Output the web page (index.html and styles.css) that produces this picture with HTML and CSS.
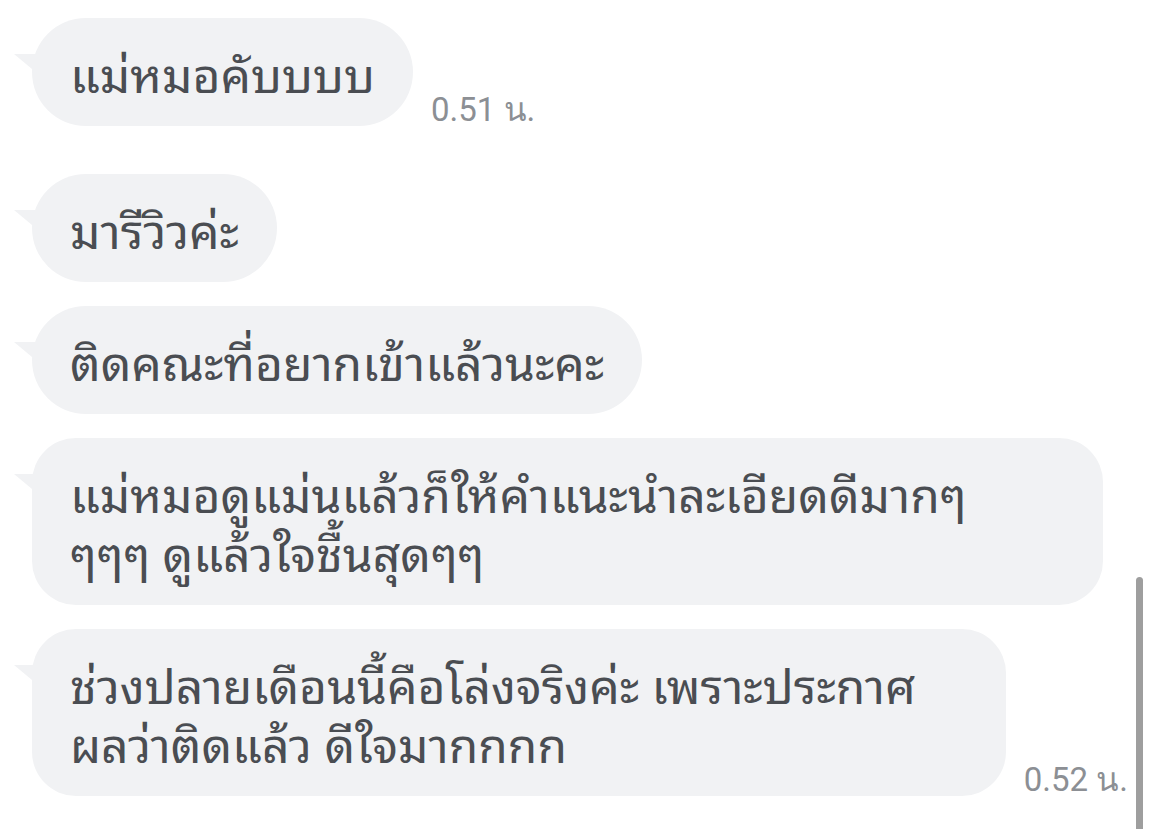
FILE: index.html
```html
<!DOCTYPE html>
<html lang="th">
<head>
<meta charset="utf-8">
<title>Chat</title>
<link rel="stylesheet" href="styles.css">
</head>
<body>
<div class="chat">
  <div class="row group-end">
    <div class="bubble">แม่หมอคับบบบ</div>
    <span class="time">0.51 น.</span>
  </div>
  <div class="row">
    <div class="bubble">มารีวิวค่ะ</div>
  </div>
  <div class="row">
    <div class="bubble">ติดคณะที่อยากเข้าแล้วนะคะ</div>
  </div>
  <div class="row wide">
    <div class="bubble fill">แม่หมอดูแม่นแล้วก็ให้คำแนะนำละเอียดดีมากๆ<br>ๆๆๆ ดูแล้วใจชื้นสุดๆๆ</div>
  </div>
  <div class="row last">
    <div class="bubble fill">ช่วงปลายเดือนนี้คือโล่งจริงค่ะ เพราะประกาศ<br>ผลว่าติดแล้ว ดีใจมากกกก</div>
    <span class="time">0.52 น.</span>
  </div>
</div>
<div class="scrollbar"></div>
</body>
</html>
```

FILE: styles.css
```css
html, body {
  margin: 0;
  padding: 0;
  background: #ffffff;
  width: 1154px;
  height: 829px;
  overflow: hidden;
}

.chat {
  display: flex;
  flex-direction: column;
  gap: 24px;
  padding: 18px 26px 0 32px;
}

.row {
  display: flex;
  align-items: flex-end;
}

.row.group-end {
  margin-bottom: 24px;
}

.row.wide {
  padding-right: 25px;
}

.bubble {
  position: relative;
  background: #f1f2f4;
  color: #4a4d52;
  font-family: "Noto Sans Thai Looped", "Noto Serif Thai", "Loma", "Garuda", "Noto Sans Thai", sans-serif;
  font-size: 48px;
  line-height: 59px;
  padding: 24px 38px 25px 38px;
  border-radius: 54px;
  white-space: nowrap;
}

.bubble.fill {
  flex: 1;
  border-radius: 44px;
}

.bubble::before {
  content: "";
  position: absolute;
  left: -18px;
  top: 36px;
  width: 0;
  height: 0;
  border-top: 0 solid transparent;
  border-right: 24px solid #f1f2f4;
  border-bottom: 20px solid transparent;
}

.time {
  font-family: Roboto, "Liberation Sans", sans-serif;
  font-size: 33px;
  line-height: 1;
  color: #8c8f94;
  margin-left: 18px;
  margin-bottom: 0;
  white-space: nowrap;
}

.scrollbar {
  position: absolute;
  left: 1136px;
  top: 577px;
  width: 7px;
  height: 260px;
  background: #9e9e9e;
  border-radius: 4px;
}
```
